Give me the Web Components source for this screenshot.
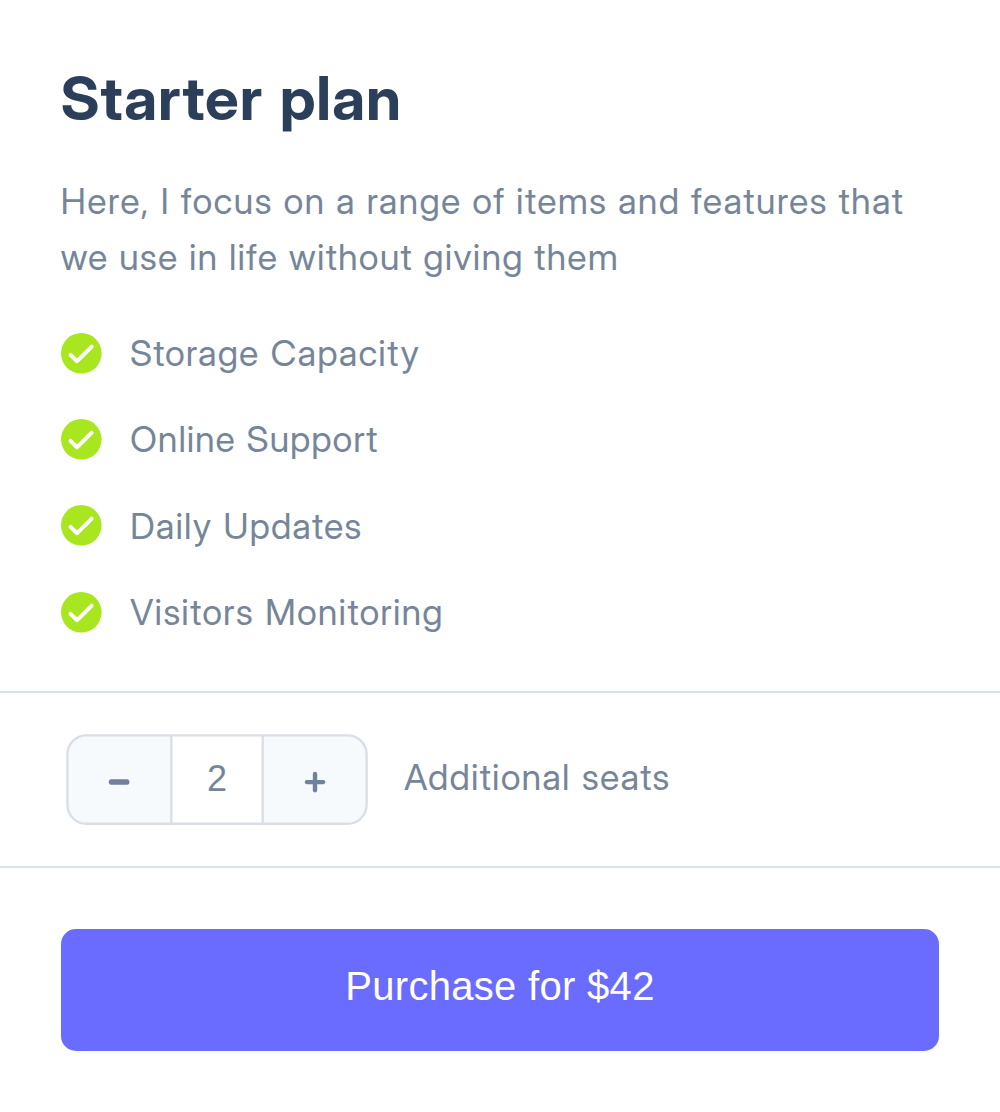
<!DOCTYPE html>
<html lang="en">
<head>
<meta charset="utf-8">
<title>Starter plan</title>
<style>
  html, body { margin: 0; background: #fff; }
  body { font-family: "Inter Display", Inter, sans-serif; color: #768599; }
</style>
</head>
<body>
<plan-card>
  <span slot="title">Starter plan</span>
  <span slot="description">Here, I focus on a range of items and features that <span style="letter-spacing:1.1px">we use in life without giving them</span></span>
  <plan-feature slot="features" style="letter-spacing:1.05px">Storage Capacity</plan-feature>
  <plan-feature slot="features" style="letter-spacing:.87px">Online Support</plan-feature>
  <plan-feature slot="features" style="letter-spacing:1.05px">Daily Updates</plan-feature>
  <plan-feature slot="features" style="letter-spacing:1.1px">Visitors Monitoring</plan-feature>
  <seat-stepper slot="seats" value="2">Additional seats</seat-stepper>
  <purchase-button slot="action">Purchase for $42</purchase-button>
</plan-card>
<script>
const define = (name, html, setup) => customElements.define(name, class extends HTMLElement {
  connectedCallback() {
    if (this.shadowRoot) return;
    this.attachShadow({ mode: 'open' }).innerHTML = html;
    if (setup) setup(this, this.shadowRoot);
  }
});

define('plan-card', `
<style>
  :host { display: flex; flex-direction: column; box-sizing: border-box; width: 1000px; height: 1112px; background: #fff; }
  .intro { height: 690.5px; box-sizing: border-box; padding: 61px 61px 0 60.5px; flex: none; }
  h1 { margin: 0; font-size: 60px; line-height: 74px; font-weight: 700; letter-spacing: .87px; word-spacing: 3px; color: #2b3f5a; }
  p { margin: 38px -10px 0 0; font-size: 36px; line-height: 56px; letter-spacing: 1.2px; word-spacing: .5px; }
  .features { display: flex; flex-direction: column; gap: 30.4px; margin: 40px 0 0 .5px; }
  .seats { box-sizing: border-box; height: 177.5px; border-top: 2px solid #d9e2ea; border-bottom: 2px solid #d9e2ea; padding: 41px 66px 0; flex: none; }
  .action { padding: 61px 61px 0; }
</style>
<section class="intro">
  <h1><slot name="title"></slot></h1>
  <p><slot name="description"></slot></p>
  <div class="features"><slot name="features"></slot></div>
</section>
<section class="seats"><slot name="seats"></slot></section>
<section class="action"><slot name="action"></slot></section>`);

define('plan-feature', `
<style>
  :host { display: flex; align-items: center; gap: 28px; height: 56px; font-size: 36px; line-height: 56px; word-spacing: 1px; }
  svg { width: 41px; height: 41px; flex: none; }
</style>
<svg viewBox="0 0 41 41" fill="none"><circle cx="20.3" cy="20.3" r="20.3" fill="#a8e620"/><path d="M9.5 21.9 16.1 28.2 30.7 13.7" stroke="#fff" stroke-width="4" stroke-linecap="round" stroke-linejoin="round"/></svg>
<span><slot></slot></span>`);

define('seat-stepper', `
<style>
  :host { display: flex; align-items: center; height: 91px; font-size: 36px; line-height: 56px; letter-spacing: 1.12px; word-spacing: 1px; }
  .box { position: relative; display: flex; width: 302px; height: 91px; border-radius: 20px; overflow: hidden; }
  button { flex: none; box-sizing: border-box; width: 105px; border: 0; margin: 0; padding: 0; background: #f6fafd; display: flex; align-items: center; justify-content: center; }
  .plus { padding-right: 2px; }
  output { width: 92px; background: #fff; display: flex; align-items: center; justify-content: center; font-family: "Liberation Sans", sans-serif; font-size: 36px; letter-spacing: 0; }
  .box .frame { position: absolute; inset: 0; width: 302px; height: 91px; margin: 0; pointer-events: none; }
  svg { width: 22px; height: 22px; margin-top: 5px; }
  .label { margin-left: 36px; margin-top: -4px; }
</style>
<div class="box">
  <button class="minus" aria-label="Remove seat"><svg viewBox="0 0 22 22"><rect x=".8" y="8.3" width="20.6" height="5.4" rx="2.5" fill="#7180a0"/></svg></button>
  <output></output>
  <button class="plus" aria-label="Add seat"><svg viewBox="0 0 22 22" fill="#7180a0"><rect x=".7" y="9" width="20.6" height="4.2" rx="2.1"/><rect x="8.8" y=".8" width="4.4" height="20.6" rx="2.1"/></svg></button>
  <svg class="frame" viewBox="0 0 302 91" fill="none" stroke="#dadfe6" stroke-width="2.4"><rect x="1.4" y="1.4" width="299.2" height="88.4" rx="19"/><path d="M105.3 1.4v88.4M196.7 1.4v88.4"/></svg>
</div>
<span class="label"><slot></slot></span>`, (el, root) => {
  const out = root.querySelector('output');
  out.textContent = el.getAttribute('value');
  root.querySelector('.minus').onclick = () => { out.textContent = Math.max(0, +out.textContent - 1); };
  root.querySelector('.plus').onclick = () => { out.textContent = +out.textContent + 1; };
});

define('purchase-button', `
<style>
  :host { display: block; }
  button { display: flex; align-items: center; justify-content: center; box-sizing: border-box; width: 100%; height: 121.5px; margin: 0; padding: 0 0 8px; border: 0; border-radius: 15px; background: #6a6cff; color: #fff; font: 40px/56px "Liberation Sans", sans-serif; letter-spacing: .3px; }
</style>
<button><slot></slot></button>`);
</script>
</body>
</html>
